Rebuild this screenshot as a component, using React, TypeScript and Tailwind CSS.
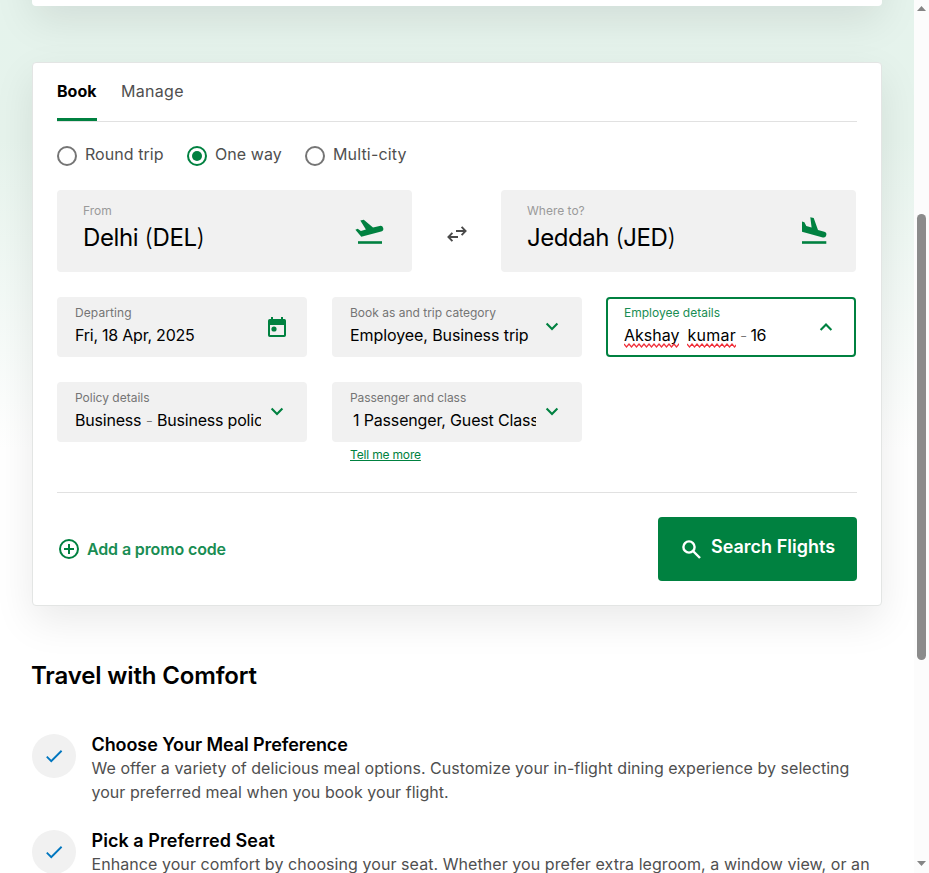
import React from "react";
import { MdCheck } from "react-icons/md";

function Radio({ label, checked, className }: { label: string; checked?: boolean; className: string }) {
  return (
    <div className="flex items-center gap-2">
      <span
        className={`flex size-5 items-center justify-center rounded-full border-2 ${
          checked ? "border-[#008140]" : "border-[#757575]"
        }`}
      >
        {checked && <span className="size-[10px] rounded-full bg-[#008140]" />}
      </span>
      <span className={`-mt-1 whitespace-nowrap text-base leading-5 text-[#4f4f4f] ${className}`}>{label}</span>
    </div>
  );
}

function Chevron({ up }: { up?: boolean }) {
  return (
    <svg width="14" height="10" viewBox="0 0 14 10" fill="none" stroke="#008140" strokeWidth="2.1">
      <path d={up ? "M1.6 7.900 7 2.500 12.400 7.900" : "M1.6 1.600 7 7 12.400 1.600"} />
    </svg>
  );
}

function CalendarIcon() {
  return (
    <svg width="20" height="22" viewBox="0 0 20 22">
      <path
        fill="#008140"
        fillRule="evenodd"
        d="M4 1h2v2h8V1h2v2h1.500A1.800 1.800 0 0 1 19 4.800v14.400A1.800 1.800 0 0 1 17.200 21H2.800A1.800 1.800 0 0 1 1 19.200V4.800A1.800 1.800 0 0 1 2.800 3H4zM3 9v10h14V9z"
      />
      <circle cx="7" cy="13" r="2.6" fill="#008140" />
    </svg>
  );
}

function SwapIcon() {
  return (
    <svg className="mt-[5px]" width="20" height="16" viewBox="0 0 20 16" fill="none" stroke="#4a4a4a" strokeWidth="1.9">
      <path d="M9 5h9.500M14.600 .8 18.600 5l-4 4.200" />
      <path d="M11 11H1.500M5.400 6.800 1.400 11l4 4.200" />
    </svg>
  );
}

function TakeoffIcon() {
  return (
    <svg className="mt-[2px] mr-px" width="30" height="26" viewBox="0 0 30 26" fill="currentColor">
      <path d="M5.300 1.500 8.800.8 18 8.600 24.600 7a2.900 2.900 0 0 1 1.600 5.600L6.300 17.800 .4 10.800l2.300-1L5.900 12.100l5-1.500z" />
      <path d="M3 22.200h24v2.600H3z" />
    </svg>
  );
}

function LandingIcon() {
  return (
    <svg className="-mt-px mr-[2px]" width="27" height="29" viewBox="0 0 27 29" fill="currentColor">
      <path d="M1 5.600l2.400.7L5.300 10l5.300 1.400L9.300 1.300l3.400.8 4.300 11.900 6.300 1.800a2.900 2.900 0 0 1-1.500 5.600L1 15.700z" />
      <path d="M1 25.200h24.300v2.600H1z" />
    </svg>
  );
}

function BigField({ label, city, code, valueClass, icon }: {
  label: string;
  city: string;
  code: string;
  valueClass: string;
  icon: React.ReactNode;
}) {
  return (
    <div className="flex h-[82px] w-[355px] items-center justify-between rounded bg-[#f1f1f1] px-[26px]">
      <div className="-mt-[5px] flex flex-col whitespace-nowrap">
        <span className="text-xs leading-4 text-[#9a9a9a]">{label}</span>
        <span className={`mt-[3px] text-2xl leading-8 text-black ${valueClass}`}>
          {city} <span className="font-light">(</span>
          {code}
          <span className="font-light">)</span>
        </span>
      </div>
      <span className="text-[#008140]">{icon}</span>
    </div>
  );
}

function Field({ label, labelClass, icon, active, children }: {
  label: string;
  labelClass: string;
  icon: React.ReactNode;
  active?: boolean;
  children: React.ReactNode;
}) {
  return (
    <div
      className={`flex h-[60px] w-[250px] rounded border-2 px-4 ${
        active ? "border-[#008140] bg-white" : "border-[#f1f1f1] bg-[#f1f1f1]"
      }`}
    >
      <div className="w-[186px] shrink-0 overflow-hidden pt-[6px] whitespace-nowrap">
        <div className={`text-xs leading-4 ${active ? "text-[#198d53]" : "text-[#757575]"} ${labelClass}`}>{label}</div>
        <div className="text-base leading-7 text-black">{children}</div>
      </div>
      <div className="flex w-[32px] shrink-0 items-center justify-center">{icon}</div>
    </div>
  );
}

function Misspelt({ children, className }: { children: string; className: string }) {
  return (
    <span className={`relative inline-block ${className}`}>
      {children}
      <svg className="absolute bottom-[1px] left-0 h-[5px] w-full overflow-hidden" fill="none" stroke="#f0303a" strokeWidth="1.2">
        <path d="M0 1 2.500 4 5 1 7.500 4 10 1 12.500 4 15 1 17.500 4 20 1 22.500 4 25 1 27.500 4 30 1 32.500 4 35 1 37.500 4 40 1 42.500 4 45 1 47.500 4 50 1 52.500 4 55 1 57.500 4 60 1" />
      </svg>
    </span>
  );
}

function Dash() {
  return <span className="font-light text-[#777777]">-</span>;
}

function Benefit({ title, titleClass, children }: { title: string; titleClass: string; children: React.ReactNode }) {
  return (
    <div className="flex h-24 gap-4">
      <span className="mt-[2px] flex size-11 shrink-0 items-center justify-center rounded-full bg-[#f1f1f1] text-[#0076bf]">
        <MdCheck size={22} />
      </span>
      <div className="-ml-[0.5px] whitespace-nowrap">
        <h3 className={`pt-px text-lg leading-[23px] font-semibold text-black ${titleClass}`}>{title}</h3>
        <div className="text-base leading-6 text-[#4f4f4f]">{children}</div>
      </div>
    </div>
  );
}

export default function App() {
  return (
    <div className="flex h-[873px] w-[929px] overflow-hidden bg-white font-['Inter',sans-serif]">
      <main className="h-full w-[914px] overflow-hidden bg-[linear-gradient(180deg,#e5f3ec_0px,#e6f3ec_140px,#ffffff_450px)] px-8">
        <div className="-mt-[200px] h-[206px] w-[850px] rounded bg-white shadow-[0_15px_40px_rgba(0,0,0,0.085)]" />

        <section className="mt-14 h-[544px] w-[850px] rounded border border-[#e3e5e4] bg-white px-6 shadow-[0_15px_40px_rgba(0,0,0,0.085)]">
          <nav className="flex h-[59px] w-[800px] gap-6 border-b border-[#e1e1e1] text-base leading-6">
            <span className="h-[58px] w-10 border-b-[3px] border-[#008140] pt-4 font-bold whitespace-nowrap text-black">Book</span>
            <span className="pt-4 tracking-[0.3px] whitespace-nowrap text-[#4f4f4f]">Manage</span>
          </nav>

          <div className="mt-6 flex h-5 gap-6">
            <Radio label="Round trip" className="w-[78px] tracking-[0.06px]" />
            <Radio label="One way" checked className="w-[66px] tracking-[0.06px]" />
            <Radio label="Multi-city" className="w-[74px] tracking-[0.15px]" />
          </div>

          <div className="mt-6 flex w-[799px] items-center justify-between">
            <BigField label="From" city="Delhi" code="DEL" valueClass="tracking-[-0.4px]" icon={<TakeoffIcon />} />
            <SwapIcon />
            <BigField label="Where to?" city="Jeddah" code="JED" valueClass="tracking-[-0.45px]" icon={<LandingIcon />} />
          </div>

          <div className="mt-[25px] flex w-[799px] justify-between">
            <Field label="Departing" labelClass="tracking-[0.1px]" icon={<CalendarIcon />}>
              <span className="tracking-[-0.23px]">Fri, 18 Apr, 2025</span>
            </Field>
            <Field label="Book as and trip category" labelClass="pl-[0.5px]" icon={<Chevron />}>
              <span className="ml-[0.5px] tracking-[-0.09px]">Employee, Business trip</span>
            </Field>
            <Field label="Employee details" labelClass="" icon={<Chevron up />} active>
              <Misspelt className="">Akshay</Misspelt>
              <Misspelt className="ml-2 tracking-[0.25px]">kumar</Misspelt>
              <span className="tracking-[-0.55px]">
                {" "}
                <Dash /> 16
              </span>
            </Field>
          </div>

          <div className="mt-[25px] flex gap-[25px]">
            <Field label="Policy details" labelClass="" icon={<Chevron />}>
              <span className="tracking-[-0.2px]">
                Business <Dash /> Business policy
              </span>
            </Field>
            <div>
              <Field label="Passenger and class" labelClass="tracking-[-0.05px]" icon={<Chevron />}>
                <span className="ml-[3px] tracking-[-0.16px]">1 Passenger, Guest Class</span>
              </Field>
              <a className="ml-[18px] block pt-1 text-xs leading-[18px] tracking-[-0.17px] text-[#008140] underline">
                <span>Tell me more</span>
              </a>
            </div>
          </div>

          <div className="mt-7 flex w-[800px] items-start justify-between border-t border-[#e1e1e1] pt-6">
            <button className="mt-[22px] ml-[2px] flex items-center gap-2 text-base leading-5 font-semibold tracking-[-0.13px] text-[#198d53]">
              <svg width="20" height="20" viewBox="0 0 20 20" fill="none" stroke="#008140" strokeWidth="2">
                <circle cx="10" cy="10" r="9" />
                <path d="M5 10h10M10 5v10" />
              </svg>
              <span>Add a promo code</span>
            </button>
            <button className="flex h-16 w-[199px] items-center gap-[10px] rounded bg-[#008140] pl-6 text-white">
              <svg width="19" height="19" viewBox="0 0 19 19" fill="none" stroke="currentColor" strokeWidth="2.4">
                <circle cx="7" cy="7" r="5.600" />
                <path d="M11 11l7 7" />
              </svg>
              <span className="-mt-1 text-lg leading-6 font-semibold whitespace-nowrap">Search Flights</span>
            </button>
          </div>
        </section>

        <h2 className="mt-[54px] -ml-px text-2xl leading-8 font-semibold tracking-[-0.15px] whitespace-nowrap text-black">
          <span>Travel with Comfort</span>
        </h2>

        <div className="mt-10">
          <Benefit title="Choose Your Meal Preference" titleClass="tracking-[-0.09px]">
            <p className="tracking-[0.04px]">
              We offer a variety of delicious meal options. Customize your in-flight dining experience by selecting
            </p>
            <p className="tracking-[0.03px]">your preferred meal when you book your flight.</p>
          </Benefit>
          <Benefit title="Pick a Preferred Seat" titleClass="tracking-[0.05px]">
            <p className="tracking-[0.065px]">
              Enhance your comfort by choosing your seat. Whether you prefer extra legroom, a window view, or an
            </p>
          </Benefit>
        </div>
      </main>

      <aside className="flex w-[15px] flex-col items-center bg-[#fcfcfc]">
        <svg width="9" height="5" viewBox="0 0 9 5" className="mt-[6px]" fill="#858585">
          <path d="M4.500 0 9 5H0z" />
        </svg>
        <div className="mt-[203px] h-[446px] w-[9px] rounded-full bg-[#8b8b8b]" />
        <svg width="9" height="5" viewBox="0 0 9 5" className="mt-[201px]" fill="#858585">
          <path d="M0 0h9L4.500 5z" />
        </svg>
      </aside>
    </div>
  );
}
